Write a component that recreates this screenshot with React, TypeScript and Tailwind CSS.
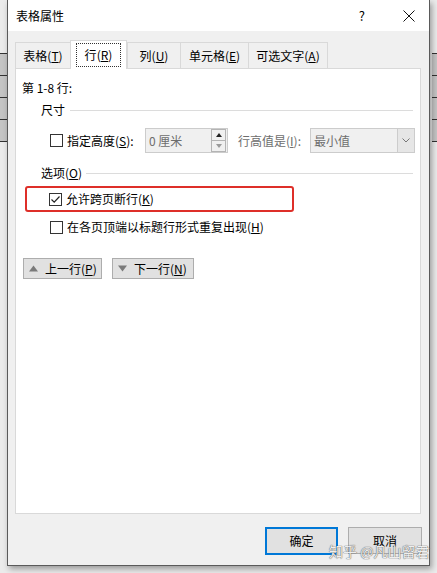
import React from 'react';

const font = "font-['Noto_Sans_CJK_SC','Noto_Sans',sans-serif]";

function Box({ checked }: { checked?: boolean }) {
  return (
    <span className="flex h-[13px] w-[13px] shrink-0 items-center justify-center border border-[#333] bg-white">
      {checked && (
        <svg width="11" height="11" viewBox="0 0 11 11">
          <path d="M1.5 5.5 L4.2 8.2 L9.5 2.5" fill="none" stroke="#222" strokeWidth="1.2" />
        </svg>
      )}
    </span>
  );
}

// the word table behind the dialog, seen on both sides
function TableStrip({ side }: { side: 'left' | 'right' }) {
  const rows = [0, 1, 2, 3];
  return (
    <div className={`flex h-[573px] w-[7px] shrink-0 flex-col bg-[#ebebeb] ${side === 'right' ? 'pl-[2px]' : ''}`}>
      <div className="h-[53px]" />
      <div className="flex flex-col border-t border-[#333] bg-[#c4c4c4]">
        {rows.map((r) => (
          <div key={r} className="h-[22px] border-b border-[#333]" />
        ))}
      </div>
    </div>
  );
}

function Tab({ label, mn, w, active, last }: { label: string; mn: string; w: string; active?: boolean; last?: boolean }) {
  if (active) {
    return (
      <div className={`relative z-10 -mb-px flex h-[29px] ${w} items-center justify-center border-x border-t border-[#d9d9d9] bg-white`}>
        <span className="border border-dotted border-[#333] px-[8px] py-[3px]">
          {label}(<u>{mn}</u>)
        </span>
      </div>
    );
  }
  return (
    <div className={`flex h-[26px] ${w} items-center justify-center border-t border-l border-[#d9d9d9] ${last ? 'border-r' : ''}`}>
      {label}(<u>{mn}</u>)
    </div>
  );
}

function Section({ children, lineMl }: { children: React.ReactNode; lineMl: string }) {
  return (
    <div className="flex h-[16px] items-center pl-[25px] pr-[7px]">
      <span>{children}</span>
      <div className={`h-px flex-1 bg-[#dcdcdc] ${lineMl}`} />
    </div>
  );
}

function NavButton({ up, label, mn, w }: { up?: boolean; label: string; mn: string; w: string }) {
  return (
    <div className={`flex h-[21px] ${w} items-center border border-[#adadad] bg-[#e1e1e1] pl-[5px]`}>
      <svg width="9" height="7" viewBox="0 0 9 7" className="mr-[7px]">
        {up ? <path d="M0 6.5 L4.5 0.5 L9 6.5 Z" fill="#7a7a7a" /> : <path d="M0 0.5 L9 0.5 L4.5 6.5 Z" fill="#7a7a7a" />}
      </svg>
      <span>
        {label}(<u>{mn}</u>)
      </span>
    </div>
  );
}

export default function App() {
  return (
    <div className={`flex h-[573px] w-[437px] overflow-hidden bg-[#ebebeb] text-[12px] leading-[16px] text-black ${font}`}>
      <TableStrip side="left" />

      <div className="relative flex h-[566px] w-[423px] shrink-0 flex-col border-x border-b border-[#5a5a5a] bg-[#f0f0f0] shadow-[2px_3px_6px_rgba(0,0,0,0.35)]">
        {/* title bar */}
        <div className="flex h-[31px] items-center bg-white pl-[8px] pr-[14px]">
          <span className="flex-1">表格属性</span>
          <span className="mr-[38px] text-[13px]">?</span>
          <svg width="12" height="12" viewBox="0 0 12 12">
            <path d="M0.5 0.5 L11.5 11.5 M11.5 0.5 L0.5 11.5" stroke="#111" strokeWidth="1" />
          </svg>
        </div>

        {/* tabs */}
        <div className="ml-[7px] mt-[9px] flex h-[28px] items-end">
          <Tab label="表格" mn="T" w="w-[55px]" />
          <Tab label="行" mn="R" w="w-[57px]" active />
          <Tab label="列" mn="U" w="w-[53px]" />
          <Tab label="单元格" mn="E" w="w-[68px]" />
          <Tab label="可选文字" mn="A" w="w-[80px]" last />
        </div>

        {/* panel */}
        <div className="ml-[7px] flex h-[446px] w-[406px] flex-col border border-[#d9d9d9] bg-white">
          <div className="mt-[11px] h-[16px] pl-[6px]">第 1-8 行:</div>

          <div className="mt-[6px]">
            <Section lineMl="ml-[5px]">尺寸</Section>
          </div>

          <div className="mt-[10px] flex h-[25px] items-center pl-[34px]">
            <Box />
            <span className="ml-[4px] w-[78px]">
              指定高度(<u>S</u>):
            </span>
            <div className="flex h-[25px] w-[83px] items-center border border-[#cccccc] bg-[#f0f0f0] pl-[3px] pr-px">
              <span className="flex-1 text-[#6d6d6d]">0 厘米</span>
              <div className="flex h-[23px] w-[15px] flex-col border border-[#b4b4b4] bg-[#f0f0f0]">
                <div className="flex flex-1 items-center justify-center border-b border-[#b4b4b4]">
                  <svg width="6" height="4" viewBox="0 0 6 4">
                    <path d="M0 4 L3 0 L6 4 Z" fill="#222" />
                  </svg>
                </div>
                <div className="flex flex-1 items-center justify-center">
                  <svg width="6" height="4" viewBox="0 0 6 4">
                    <path d="M0 0 L6 0 L3 4 Z" fill="#9a9a9a" />
                  </svg>
                </div>
              </div>
            </div>
            <span className="ml-[10px] w-[72px] text-[#6d6d6d]">
              行高值是(<u>I</u>):
            </span>
            <div className="flex h-[25px] w-[105px] items-center border border-[#cccccc] bg-[#f0f0f0]">
              <span className="flex-1 pl-[3px] text-[#6d6d6d]">最小值</span>
              <div className="flex h-full w-[17px] items-center justify-center border-l border-[#cccccc] bg-[#e6e6e6]">
                <svg width="8" height="5" viewBox="0 0 8 5">
                  <path d="M0.5 0.5 L4 4 L7.5 0.5" fill="none" stroke="#777" strokeWidth="1" />
                </svg>
              </div>
            </div>
          </div>

          <div className="mt-[12px]">
            <Section lineMl="ml-[4px]">
              选项(<u>O</u>)
            </Section>
          </div>

          <div className="ml-[9px] mt-[5px] flex h-[26px] w-[269px] items-center rounded-[3px] border-[2.5px] border-[#de2f29] pl-[22px]">
            <Box checked />
            <span className="ml-[4px]">
              允许跨页断行(<u>K</u>)
            </span>
          </div>

          <div className="mt-[7px] flex h-[16px] items-center pl-[34px]">
            <Box />
            <span className="ml-[4px]">
              在各页顶端以标题行形式重复出现(<u>H</u>)
            </span>
          </div>

          <div className="mt-[23px] flex gap-[10px] pl-[7px]">
            <NavButton up label="上一行" mn="P" w="w-[79px]" />
            <NavButton label="下一行" mn="N" w="w-[82px]" />
          </div>
        </div>

        {/* footer buttons */}
        <div className="mr-[7px] mt-[13px] flex justify-end gap-[10px]">
          <div className="flex h-[28px] w-[73px] items-center justify-center border-2 border-[#0078d7] bg-[#e1e1e1]">确定</div>
          <div className="flex h-[27px] w-[74px] items-center justify-center border border-[#adadad] bg-[#e1e1e1]">取消</div>
        </div>

        {/* watermark */}
        <div className="absolute left-[321px] top-[541px] whitespace-nowrap text-[14px] leading-[20px] text-white/90 [text-shadow:0_0_1px_#555,0_0_1px_#555]">
          知乎 @凡山留君
        </div>
      </div>

      <TableStrip side="right" />
    </div>
  );
}
